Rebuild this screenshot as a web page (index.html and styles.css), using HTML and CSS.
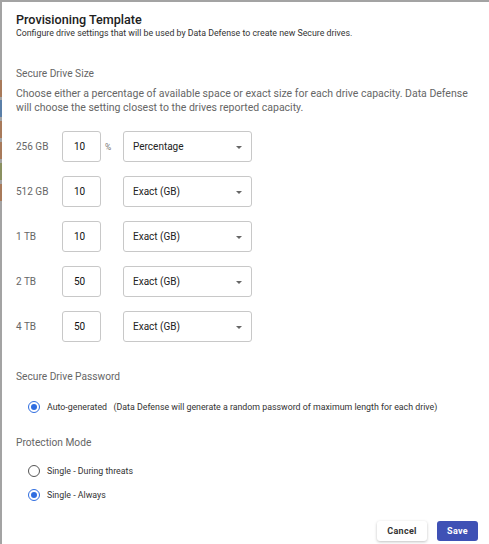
FILE: index.html
```html
<!DOCTYPE html>
<html>
<head>
<meta charset="utf-8">
<link rel="stylesheet" href="styles.css">
</head>
<body>
<div class="backdrop">
  <div class="stripes">
    <span class="s s1"></span><span class="s s2"></span><span class="s s3"></span><span class="s s4"></span><span class="s s5"></span><span class="s s6"></span>
  </div>
  <div class="dialog">
    <h1 class="title">Provisioning Template</h1>
    <p class="subtitle">Configure drive settings that will be used by Data Defense to create new Secure drives.</p>

    <h2 class="section">Secure Drive Size</h2>
    <p class="desc">Choose either a percentage of available space or exact size for each drive capacity. Data Defense will choose the setting closest to the drives reported capacity.</p>

    <div class="rows">
      <div class="row">
        <span class="cap">256 GB</span>
        <div class="num">10</div>
        <span class="unit">%</span>
        <div class="select">Percentage<span class="caret"></span></div>
      </div>
      <div class="row">
        <span class="cap">512 GB</span>
        <div class="num">10</div>
        <span class="unit"></span>
        <div class="select">Exact (GB)<span class="caret"></span></div>
      </div>
      <div class="row">
        <span class="cap">1 TB</span>
        <div class="num">10</div>
        <span class="unit"></span>
        <div class="select">Exact (GB)<span class="caret"></span></div>
      </div>
      <div class="row">
        <span class="cap">2 TB</span>
        <div class="num">50</div>
        <span class="unit"></span>
        <div class="select">Exact (GB)<span class="caret"></span></div>
      </div>
      <div class="row">
        <span class="cap">4 TB</span>
        <div class="num">50</div>
        <span class="unit"></span>
        <div class="select">Exact (GB)<span class="caret"></span></div>
      </div>
    </div>

    <h2 class="section pw">Secure Drive Password</h2>
    <div class="radio-row r-auto"><span class="radio on"></span><span class="rlabel">Auto-generated   (Data Defense will generate a random password of maximum length for each drive)</span></div>

    <h2 class="section pm">Protection Mode</h2>
    <div class="radio-row r-threat"><span class="radio"></span><span class="rlabel">Single - During threats</span></div>
    <div class="radio-row r-always"><span class="radio on"></span><span class="rlabel">Single - Always</span></div>

    <div class="actions">
      <button class="btn cancel">Cancel</button>
      <button class="btn save">Save</button>
    </div>
  </div>
</div>
</body>
</html>
```

FILE: styles.css
```css
* { box-sizing: border-box; }
html, body { margin: 0; padding: 0; }
body {
  width: 489px;
  height: 544px;
  overflow: hidden;
  background: #a3a3a3;
  font-family: Roboto, "Liberation Sans", sans-serif;
}
.backdrop {
  position: relative;
  width: 489px;
  height: 544px;
  padding: 2px 0 0 2px;
}
.stripes {
  position: absolute;
  left: 0;
  top: 0;
  width: 2px;
  height: 544px;
}
.s { position: absolute; left: 0; width: 2px; }
.s1 { top: 80px; height: 17px; background: #a87a5a; }
.s2 { top: 100px; height: 17px; background: #5a7fa8; }
.s3 { top: 121px; height: 17px; background: #a87a5a; }
.s4 { top: 142px; height: 17px; background: #a87a5a; }
.s5 { top: 163px; height: 17px; background: #8a9060; }
.s6 { top: 184px; height: 17px; background: #a87a5a; }

.dialog {
  background: #fff;
  width: 487px;
  height: 542px;
  padding: 10px 11px 0 14px;
  color: #333;
}
.title {
  margin: 0;
  font-size: 12.6px;
  font-weight: 500;
  color: #212121;
  line-height: 16px;
}
.subtitle {
  margin: 0;
  font-size: 8.8px;
  line-height: 11px;
  color: #333;
}
.section {
  margin: 28px 0 0;
  font-size: 10.2px;
  font-weight: 400;
  color: #666;
  line-height: 13px;
}
.desc {
  margin: 7px 0 0;
  padding-right: 8px;
  font-size: 10.5px;
  line-height: 14px;
  color: #666;
}
.rows {
  margin-top: 16px;
  display: flex;
  flex-direction: column;
  gap: 14px;
}
.row {
  display: flex;
  align-items: center;
  height: 31px;
}
.cap {
  width: 46px;
  font-size: 10px;
  color: #666;
}
.num {
  width: 39px;
  height: 31px;
  border: 1px solid #c8c8c8;
  border-radius: 3px;
  display: flex;
  align-items: center;
  padding-left: 11px;
  font-size: 10px;
  font-weight: 400;
  color: #111;
}
.unit {
  width: 22px;
  padding-left: 4px;
  font-size: 8.5px;
  color: #777;
}
.select {
  position: relative;
  width: 129px;
  height: 31px;
  border: 1px solid #c8c8c8;
  border-radius: 3px;
  display: flex;
  align-items: center;
  padding-left: 9px;
  font-size: 10px;
  color: #222;
}
.caret {
  position: absolute;
  right: 9px;
  top: 14px;
  width: 0;
  height: 0;
  border-left: 3px solid transparent;
  border-right: 3px solid transparent;
  border-top: 3px solid #666;
}
.section.pw { margin-top: 28px; }
.section.pm { margin-top: 22px; }
.radio-row {
  display: flex;
  align-items: center;
  padding-left: 12px;
  height: 14px;
}
.r-auto { margin-top: 17px; }
.r-threat { margin-top: 15px; }
.r-always { margin-top: 10px; }
.radio {
  width: 12px;
  height: 12px;
  border: 1.5px solid #555;
  border-radius: 50%;
  position: relative;
  flex: none;
}
.radio.on { border-color: #2f6de0; }
.radio.on::after {
  content: "";
  position: absolute;
  left: 1.5px;
  top: 1.5px;
  width: 6px;
  height: 6px;
  border-radius: 50%;
  background: #2f6de0;
}
.rlabel {
  margin-left: 7px;
  font-size: 8.8px;
  color: #333;
  white-space: pre;
}
.actions {
  display: flex;
  justify-content: flex-end;
  gap: 10px;
  margin-top: 19px;
}
.btn {
  height: 20px;
  border: none;
  border-radius: 3px;
  font-family: Roboto, "Liberation Sans", sans-serif;
  font-size: 9px;
  font-weight: 700;
  letter-spacing: 0.3px;
  padding: 0;
}
.cancel {
  width: 50px;
  background: #fff;
  color: #333;
  box-shadow: 0 1px 3px rgba(0,0,0,0.25);
}
.save {
  width: 41px;
  background: #3f51b5;
  color: #fff;
}
```
